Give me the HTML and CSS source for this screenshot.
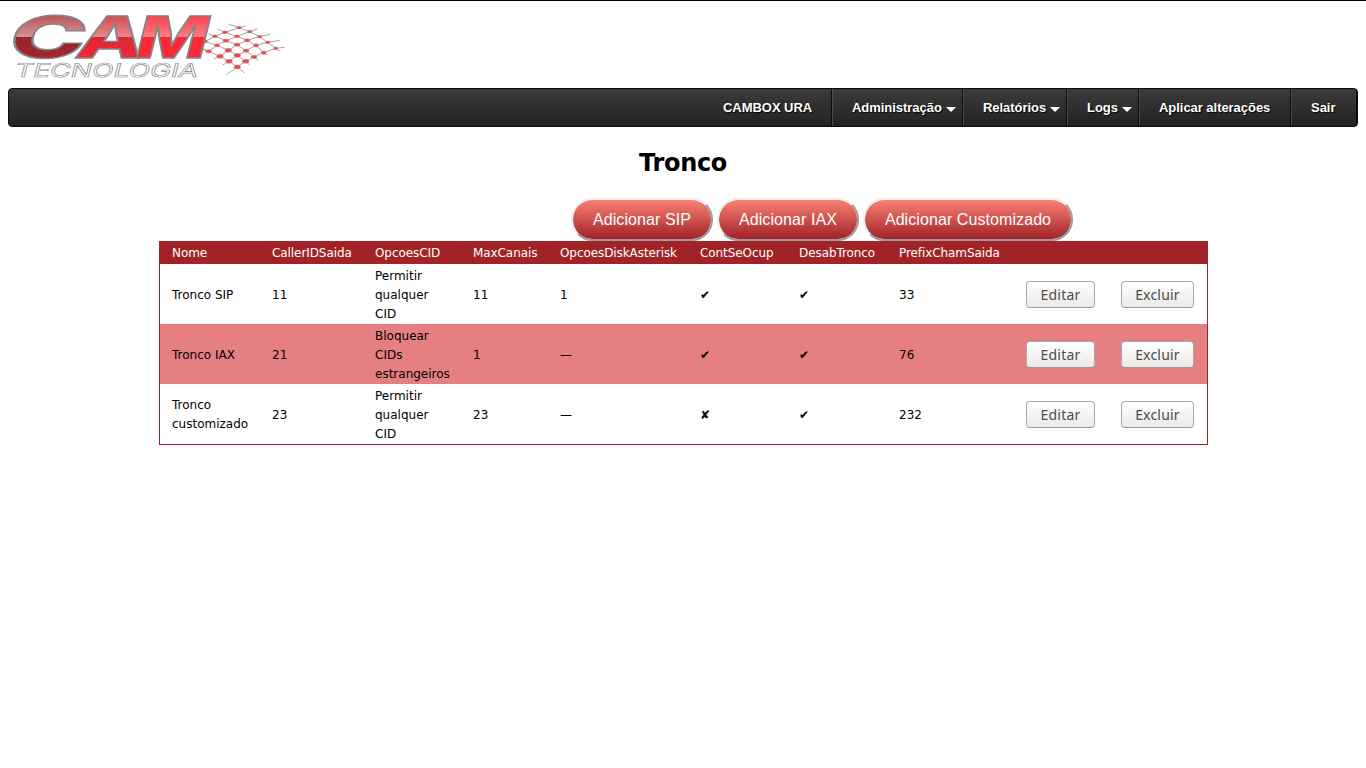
FILE: index.html
```html
<!DOCTYPE html>
<html lang="pt-BR">
<head>
<meta charset="utf-8">
<title>Tronco</title>
<link rel="stylesheet" href="styles.css">
</head>
<body>
<header class="brand">
<svg class="logo" width="290" height="87" viewBox="0 0 290 87" role="img" aria-label="CAM Tecnologia">
  <defs>
    <linearGradient id="red" gradientUnits="userSpaceOnUse" x1="0" y1="15" x2="0" y2="59">
      <stop offset="0" stop-color="#f63e48"/><stop offset=".5" stop-color="#ff8086"/><stop offset=".51" stop-color="#fa2636"/><stop offset="1" stop-color="#ff2b3b"/>
    </linearGradient>
    <linearGradient id="mid" gradientUnits="userSpaceOnUse" x1="0" y1="15" x2="0" y2="59">
      <stop offset="0" stop-color="#cf4a50"/><stop offset=".5" stop-color="#e9888c"/><stop offset=".51" stop-color="#df2634"/><stop offset="1" stop-color="#f02938"/>
    </linearGradient>
    <linearGradient id="side" gradientUnits="userSpaceOnUse" x1="0" y1="15" x2="0" y2="59">
      <stop offset="0" stop-color="#b65658"/><stop offset=".5" stop-color="#da9192"/><stop offset=".51" stop-color="#94252b"/><stop offset="1" stop-color="#a4272d"/>
    </linearGradient>
  </defs>
  <g class="mesh">
    <path d="M265 72L297 83L329 95L359 110L383 127L407 145L420 153M233 87L255 97L291 109L321 121L348 136L371 158L382 166M206 102L225 109L258 122L291 134L318 152L342 171L354 181M180 116L195 124L231 136L265 151L292 166L317 184L329 195M170 138L206 154L240 169L267 184L292 201L314 219M316 78L297 83L255 97L225 109L195 124L170 138M352 87L329 95L291 109L258 122L231 136L206 154L187 148M390 103L359 110L321 121L291 134L265 151L240 169L222 177M420 121L383 127L348 136L318 152L292 166L267 184L248 195M434 142L407 145L371 158L342 171L317 184L292 201L259 224"/>
    <g class="nodes">
      <ellipse cx="297" cy="83" rx="7" ry="4"/><ellipse cx="329" cy="95" rx="7" ry="4"/><ellipse cx="359" cy="110" rx="7" ry="4"/><ellipse cx="383" cy="127" rx="7" ry="4"/><ellipse cx="407" cy="145" rx="7" ry="4"/>
      <ellipse cx="255" cy="97" rx="8" ry="4.5"/><ellipse cx="291" cy="109" rx="8" ry="4.5"/><ellipse cx="321" cy="121" rx="8" ry="5"/><ellipse cx="348" cy="136" rx="8" ry="5"/><ellipse cx="371" cy="158" rx="8" ry="5"/>
      <ellipse cx="225" cy="109" rx="8" ry="4.5"/><ellipse cx="258" cy="122" rx="9" ry="5"/><ellipse cx="291" cy="134" rx="9" ry="5"/><ellipse cx="318" cy="152" rx="9" ry="5"/><ellipse cx="342" cy="171" rx="9" ry="5"/>
      <ellipse cx="195" cy="124" rx="8" ry="5"/><ellipse cx="231" cy="136" rx="8" ry="5"/><ellipse cx="265" cy="151" rx="10" ry="6"/><ellipse cx="292" cy="166" rx="10" ry="6"/><ellipse cx="317" cy="184" rx="10" ry="6"/>
      <ellipse cx="206" cy="154" rx="9" ry="5"/><ellipse cx="240" cy="169" rx="10" ry="6"/><ellipse cx="267" cy="184" rx="10" ry="6"/><ellipse cx="292" cy="201" rx="10" ry="6"/>
    </g>
  </g>
  <g class="wordmark" transform="translate(9 0) skewX(-14)">
    <text fill="url(#side)" x="11" y="58" textLength="76" lengthAdjust="spacingAndGlyphs">C</text>
    <text fill="url(#mid)" x="79" y="58" textLength="67" lengthAdjust="spacingAndGlyphs">A</text>
    <text fill="url(#red)" x="138" y="58" textLength="72" lengthAdjust="spacingAndGlyphs">M</text>
  </g>
  <text class="subtitle" x="16" y="77" textLength="183" lengthAdjust="spacingAndGlyphs" transform="translate(17 0) skewX(-14)">TECNOLOGIA</text>
</svg>
</header>
<nav class="menu">
  <a class="item ura">CAMBOX URA</a>
  <a class="item adm">Administração<i class="caret"></i></a>
  <a class="item rel">Relatórios<i class="caret"></i></a>
  <a class="item logs">Logs<i class="caret"></i></a>
  <a class="item apply">Aplicar alterações</a>
  <a class="item exit">Sair</a>
</nav>
<main>
  <h1 class="title">Tronco</h1>
  <div class="actions">
    <button class="add">Adicionar SIP</button>
    <button class="add">Adicionar IAX</button>
    <button class="add wide">Adicionar Customizado</button>
  </div>
  <table class="trunks">
    <colgroup><col class="c1"><col class="c2"><col class="c3"><col class="c4"><col class="c5"><col class="c6"><col class="c7"><col class="c8"><col class="c9"><col class="c10"></colgroup>
    <thead><tr><th>Nome</th><th>CallerIDSaida</th><th>OpcoesCID</th><th>MaxCanais</th><th>OpcoesDiskAsterisk</th><th>ContSeOcup</th><th>DesabTronco</th><th>PrefixChamSaida</th><th></th><th></th></tr></thead>
    <tbody>
      <tr><td>Tronco SIP</td><td>11</td><td>Permitir<br>qualquer<br>CID</td><td>11</td><td>1</td><td>✔</td><td>✔</td><td>33</td><td class="snug"><button class="act">Editar</button></td><td class="snug"><button class="act del">Excluir</button></td></tr>
      <tr class="alt"><td>Tronco IAX</td><td>21</td><td>Bloquear<br>CIDs<br>estrangeiros</td><td>1</td><td>—</td><td>✔</td><td>✔</td><td>76</td><td class="snug"><button class="act">Editar</button></td><td class="snug"><button class="act del">Excluir</button></td></tr>
      <tr><td class="snug">Tronco<br>customizado</td><td>23</td><td>Permitir<br>qualquer<br>CID</td><td>23</td><td>—</td><td>✘</td><td>✔</td><td>232</td><td class="snug"><button class="act">Editar</button></td><td class="snug"><button class="act del">Excluir</button></td></tr>
    </tbody>
  </table>
</main>
</body>
</html>
```

FILE: styles.css
```css
* { box-sizing: border-box; }
body {
  margin: 0;
  background: #fff;
  color: #000;
  font-family: "DejaVu Sans", sans-serif;
}
.brand { height: 88px; border-top: 1px solid #000; }
.logo { display: block; margin-top: -1px; }
.mesh { transform: translate(140px, 0) scale(.33333); fill: none; stroke: #777; stroke-width: 2; }
.nodes { fill: #ee4650; stroke: #d98a8e; stroke-width: 1.5; }
.wordmark { font: 800 58px Inter, sans-serif; stroke: #858585; stroke-width: 1.4; }
.subtitle { font: 400 19px Inter, sans-serif; fill: #fff; stroke: #8a8a8a; stroke-width: .6; }

.menu {
  display: flex;
  justify-content: flex-end;
  margin: 0 8px;
  height: 39px;
  border: 1px solid #0a0a0a;
  border-radius: 4px;
  background: linear-gradient(#3b3b3b, #222);
  overflow: hidden;
}
.item {
  display: flex;
  align-items: center;
  padding-left: 19px;
  border-left: 1px solid #4a4a4a;
  border-right: 1px solid #0a0a0a;
  color: #fff;
  font: bold 13px "Liberation Sans", Arial, sans-serif;
  letter-spacing: -.04px;
  text-shadow: 1px 1px 1px #000;
  white-space: nowrap;
}
.ura { width: 129px; border-left-color: transparent; }
.adm { width: 131px; }
.rel { width: 104px; }
.logs { width: 72px; }
.apply { width: 152px; }
.exit { width: 66px; }
.caret {
  margin: 4px 0 0 4px;
  border: 5px solid transparent;
  border-top-color: #fff;
  border-bottom: 0;
}
.title {
  margin: 21px 0 20px;
  font-size: 24px;
  line-height: 30px;
  letter-spacing: -.3px;
  text-align: center;
}
.actions { display: flex; gap: 4px; margin-left: 571px; }
.add {
  width: 142px;
  height: 43px;
  padding: 0;
  border: 2px outset #f0f0f0;
  border-radius: 21px;
  background: linear-gradient(#fa8072, #a12328) padding-box;
  color: #fff;
  font: 16px "Liberation Sans", Arial, sans-serif;
  letter-spacing: .08px;
}
.wide { width: 210px; }
.trunks {
  width: 1049px;
  margin-left: 159px;
  table-layout: fixed;
  border: 1px solid #a12328;
  border-spacing: 0;
  font-size: 12px;
  line-height: 19px;
}
.trunks th, .trunks td { padding: 0 0 0 12px; text-align: left; vertical-align: middle; }
.trunks th { height: 22px; background: #a12328; color: #fff; font-weight: 400; letter-spacing: -.08px; }
.trunks td { height: 60px; padding-top: 3px; }
.trunks td.snug { padding-top: 2px; padding-bottom: 1px; }
.alt { background: #e67f82; }
.c1 { width: 100px; }
.c2 { width: 103px; }
.c3 { width: 98px; }
.c4 { width: 87px; }
.c5 { width: 140px; }
.c6 { width: 99px; }
.c7 { width: 100px; }
.c8 { width: 127px; }
.c9 { width: 95px; }
.act {
  display: block;
  width: 69px;
  height: 27px;
  padding: 0;
  border: 1px solid #aaa;
  border-bottom-color: #999;
  border-radius: 4px;
  background: linear-gradient(#fff, #ebe9e7);
  color: #4c4c4c;
  font: 14px/24px "Noto Sans", sans-serif;
  letter-spacing: .2px;
}
.del { width: 73px; }
```
